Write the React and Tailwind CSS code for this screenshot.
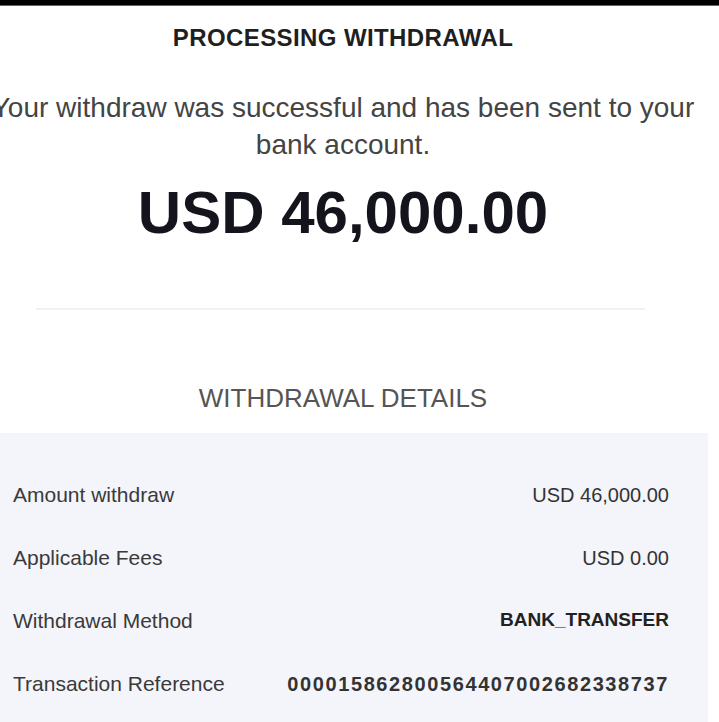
import React from "react";

export default function App() {
    // rows for the details panel
    const rows = [
        { label: "Amount withdraw", value: "USD 46,000.00", cls: "text-[20px] font-normal text-[#333]" },
        { label: "Applicable Fees", value: "USD 0.00", cls: "text-[20px] font-normal text-[#333]" },
        { label: "Withdrawal Method", value: "BANK_TRANSFER", cls: "text-[19px] font-bold text-[#222]" },
        { label: "Transaction Reference", value: "000015862800564407002682338737", cls: "text-[20px] font-bold text-[#333] tracking-[1.6px]" },
    ];

    return (
        <div className="w-[719px] h-[722px] overflow-hidden bg-white font-['Liberation_Sans',Arial,sans-serif]">
            <div className="h-[6px] bg-black border-b border-[#666]"></div>

            <div className="w-[686px] flex flex-col items-center">
                <h1 className="mt-[17px] text-[24px] leading-[30px] font-bold tracking-[0.4px] text-[#1f1f1f]">
                    PROCESSING WITHDRAWAL
                </h1>

                <div className="mt-[36px] w-full flex justify-center">
                    <p className="shrink-0 whitespace-nowrap text-center text-[28px] leading-[37px] text-[#444]">
                        Your withdraw was successful and has been sent to your
                        <br />
                        bank account.
                    </p>
                </div>

                <div className="mt-[15px] text-[60px] leading-[70px] font-bold text-[#14141c]">
                    USD 46,000.00
                </div>

                <div className="mt-[60px] mr-[6px] w-[609px] h-[2px] bg-[#f1f1f1]"></div>

                <h2 className="mt-[72px] text-[26px] leading-[32px] text-[#555]">
                    WITHDRAWAL DETAILS
                </h2>
            </div>

            <div className="mt-[19px] w-[708px] h-[400px] bg-[#f4f5fa] pt-[30px] pl-[13px] pr-[39px]">
                {rows.map((r) => (
                    <div key={r.label} className="h-[63px] flex items-center justify-between">
                        <span className="text-[21px] text-[#3a3a3a]">{r.label}</span>
                        <span className={r.cls}>{r.value}</span>
                    </div>
                ))}
            </div>
        </div>
    );
}
